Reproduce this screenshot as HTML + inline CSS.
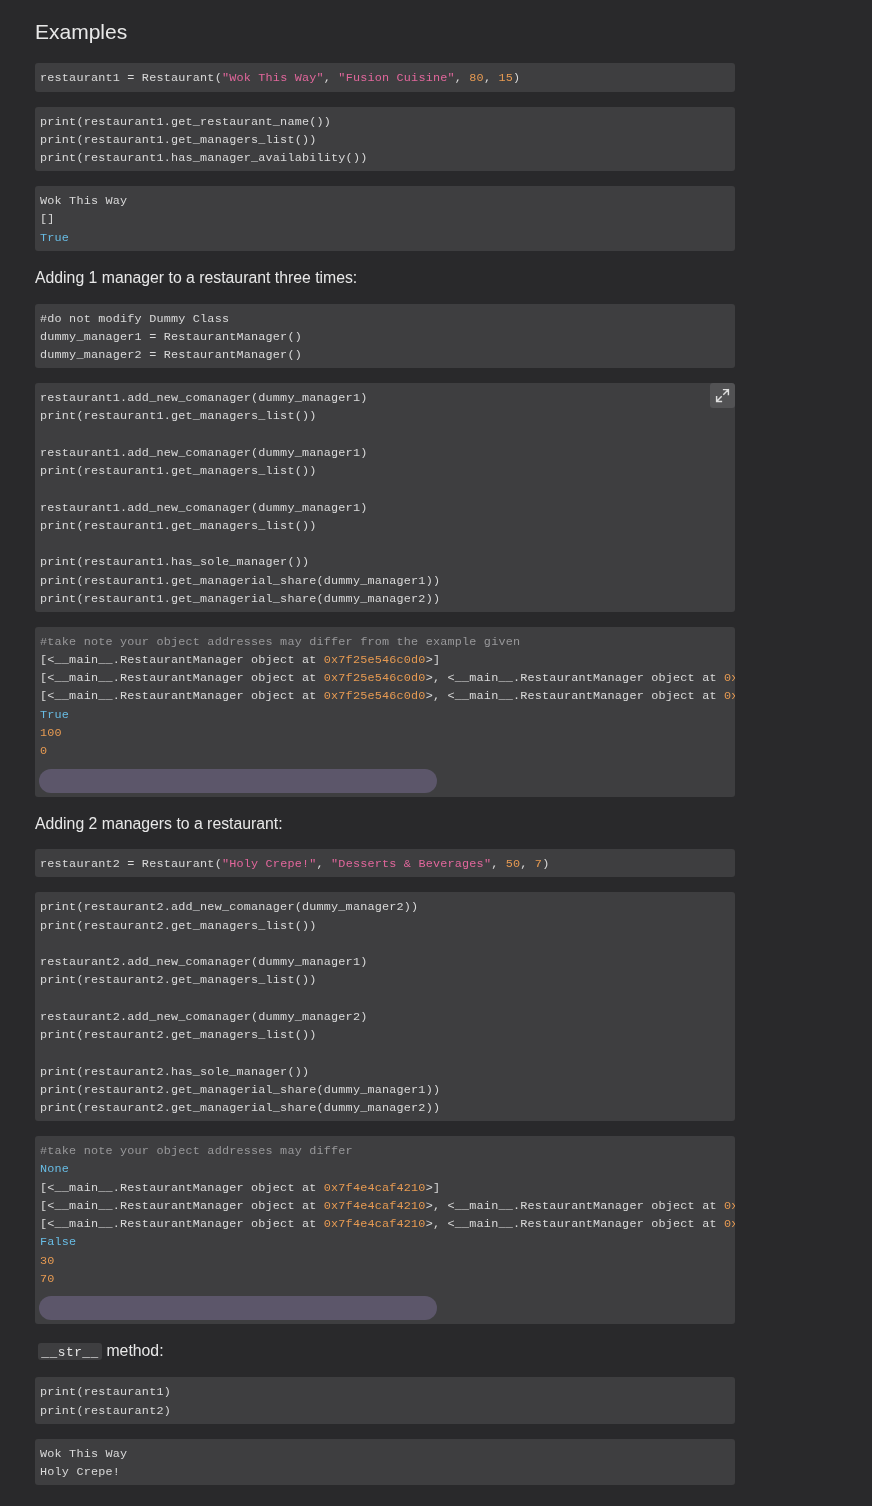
<!DOCTYPE html>
<html><head><meta charset="utf-8">
<style>
html,body{margin:0;padding:0;background:#29292b;width:872px;height:1506px;overflow:hidden;position:relative}
body{font-family:"Liberation Sans",sans-serif;color:#e8e8e8}
.h{position:absolute;left:35px;white-space:nowrap;font-size:15.8px;line-height:20px}
.b{position:absolute;left:35px;width:700px;background:#3e3e40;border-radius:3px;overflow:hidden}
pre{margin:0;padding:6px 0 0 5px;font-family:"Liberation Mono",monospace;font-size:11.8px;letter-spacing:0.197px;line-height:18.27px;color:#dadada;white-space:pre}
.s{color:#e2679c}.n{color:#e69a52}.k{color:#68bce4}.c{color:#98989a}
.sb{position:absolute;left:4px;width:398px;height:24px;border-radius:12px;background:#5c566a}
.ex{position:absolute;right:0;top:0;width:25px;height:25px;border-radius:3px;background:#525254}
code{font-family:"Liberation Mono",monospace}
</style></head><body><div id="wrap" style="position:absolute;left:0;top:0;width:872px;height:1506px;will-change:transform">
<div class="h" style="top:19px;font-size:21px;line-height:26px">Examples</div>

<div class="b" style="top:63px;height:29px"><pre>restaurant1 = Restaurant(<span class="s">"Wok This Way"</span>, <span class="s">"Fusion Cuisine"</span>, <span class="n">80</span>, <span class="n">15</span>)</pre></div>

<div class="b" style="top:107px;height:64px"><pre style="padding-top:5.7px">print(restaurant1.get_restaurant_name())
print(restaurant1.get_managers_list())
print(restaurant1.has_manager_availability())</pre></div>

<div class="b" style="top:186px;height:65px"><pre>Wok This Way
[]
<span class="k">True</span></pre></div>

<div class="h" style="top:267.9px">Adding 1 manager to a restaurant three times:</div>

<div class="b" style="top:304px;height:64px"><pre style="padding-top:5.7px">#do not modify Dummy Class
dummy_manager1 = RestaurantManager()
dummy_manager2 = RestaurantManager()</pre></div>

<div class="b" style="top:383px;height:229px"><pre>restaurant1.add_new_comanager(dummy_manager1)
print(restaurant1.get_managers_list())

restaurant1.add_new_comanager(dummy_manager1)
print(restaurant1.get_managers_list())

restaurant1.add_new_comanager(dummy_manager1)
print(restaurant1.get_managers_list())

print(restaurant1.has_sole_manager())
print(restaurant1.get_managerial_share(dummy_manager1))
print(restaurant1.get_managerial_share(dummy_manager2))</pre>
<div class="ex"><svg width="25" height="25" viewBox="0 0 25 25"><g fill="none" stroke="#dedede" stroke-width="1.45" stroke-linecap="square"><path d="M13.6 6.6H18.4V11.4M18.2 6.8L13.8 11.2M6.6 13.6V18.4H11.4M6.8 18.2L11.2 13.8"/></g></svg></div></div>

<div class="b" style="top:627px;height:170px"><pre style="padding-top:5.7px"><span class="c">#take note your object addresses may differ from the example given</span>
[&lt;__main__.RestaurantManager object at <span class="n">0x7f25e546c0d0</span>&gt;]
[&lt;__main__.RestaurantManager object at <span class="n">0x7f25e546c0d0</span>&gt;, &lt;__main__.RestaurantManager object at <span class="n">0x7f25e546c0d0</span>&gt;]
[&lt;__main__.RestaurantManager object at <span class="n">0x7f25e546c0d0</span>&gt;, &lt;__main__.RestaurantManager object at <span class="n">0x7f25e546c0d0</span>&gt;]
<span class="k">True</span>
<span class="n">100</span>
<span class="n">0</span></pre>
<div class="sb" style="top:142px"></div></div>

<div class="h" style="top:814.4px">Adding 2 managers to a restaurant:</div>

<div class="b" style="top:849px;height:28px"><pre>restaurant2 = Restaurant(<span class="s">"Holy Crepe!"</span>, <span class="s">"Desserts &amp; Beverages"</span>, <span class="n">50</span>, <span class="n">7</span>)</pre></div>

<div class="b" style="top:892px;height:229px"><pre style="padding-top:6.35px">print(restaurant2.add_new_comanager(dummy_manager2))
print(restaurant2.get_managers_list())

restaurant2.add_new_comanager(dummy_manager1)
print(restaurant2.get_managers_list())

restaurant2.add_new_comanager(dummy_manager2)
print(restaurant2.get_managers_list())

print(restaurant2.has_sole_manager())
print(restaurant2.get_managerial_share(dummy_manager1))
print(restaurant2.get_managerial_share(dummy_manager2))</pre></div>

<div class="b" style="top:1136px;height:188px"><pre><span class="c">#take note your object addresses may differ</span>
<span class="k">None</span>
[&lt;__main__.RestaurantManager object at <span class="n">0x7f4e4caf4210</span>&gt;]
[&lt;__main__.RestaurantManager object at <span class="n">0x7f4e4caf4210</span>&gt;, &lt;__main__.RestaurantManager object at <span class="n">0x7f4e4caf4210</span>&gt;]
[&lt;__main__.RestaurantManager object at <span class="n">0x7f4e4caf4210</span>&gt;, &lt;__main__.RestaurantManager object at <span class="n">0x7f4e4caf4210</span>&gt;]
<span class="k">False</span>
<span class="n">30</span>
<span class="n">70</span></pre>
<div class="sb" style="top:160px"></div></div>

<div class="h" style="top:1340.5px"><code style="display:inline-block;background:#3e3e40;border-radius:3px;padding:2.2px 3.3px 0;font-size:12.8px;letter-spacing:0.53px;line-height:14.8px;vertical-align:baseline;margin-left:3px">__str__</code> method:</div>

<div class="b" style="top:1377px;height:47px"><pre style="padding-top:6.35px">print(restaurant1)
print(restaurant2)</pre></div>

<div class="b" style="top:1439px;height:46px"><pre>Wok This Way
Holy Crepe!</pre></div>

</div></body></html>
